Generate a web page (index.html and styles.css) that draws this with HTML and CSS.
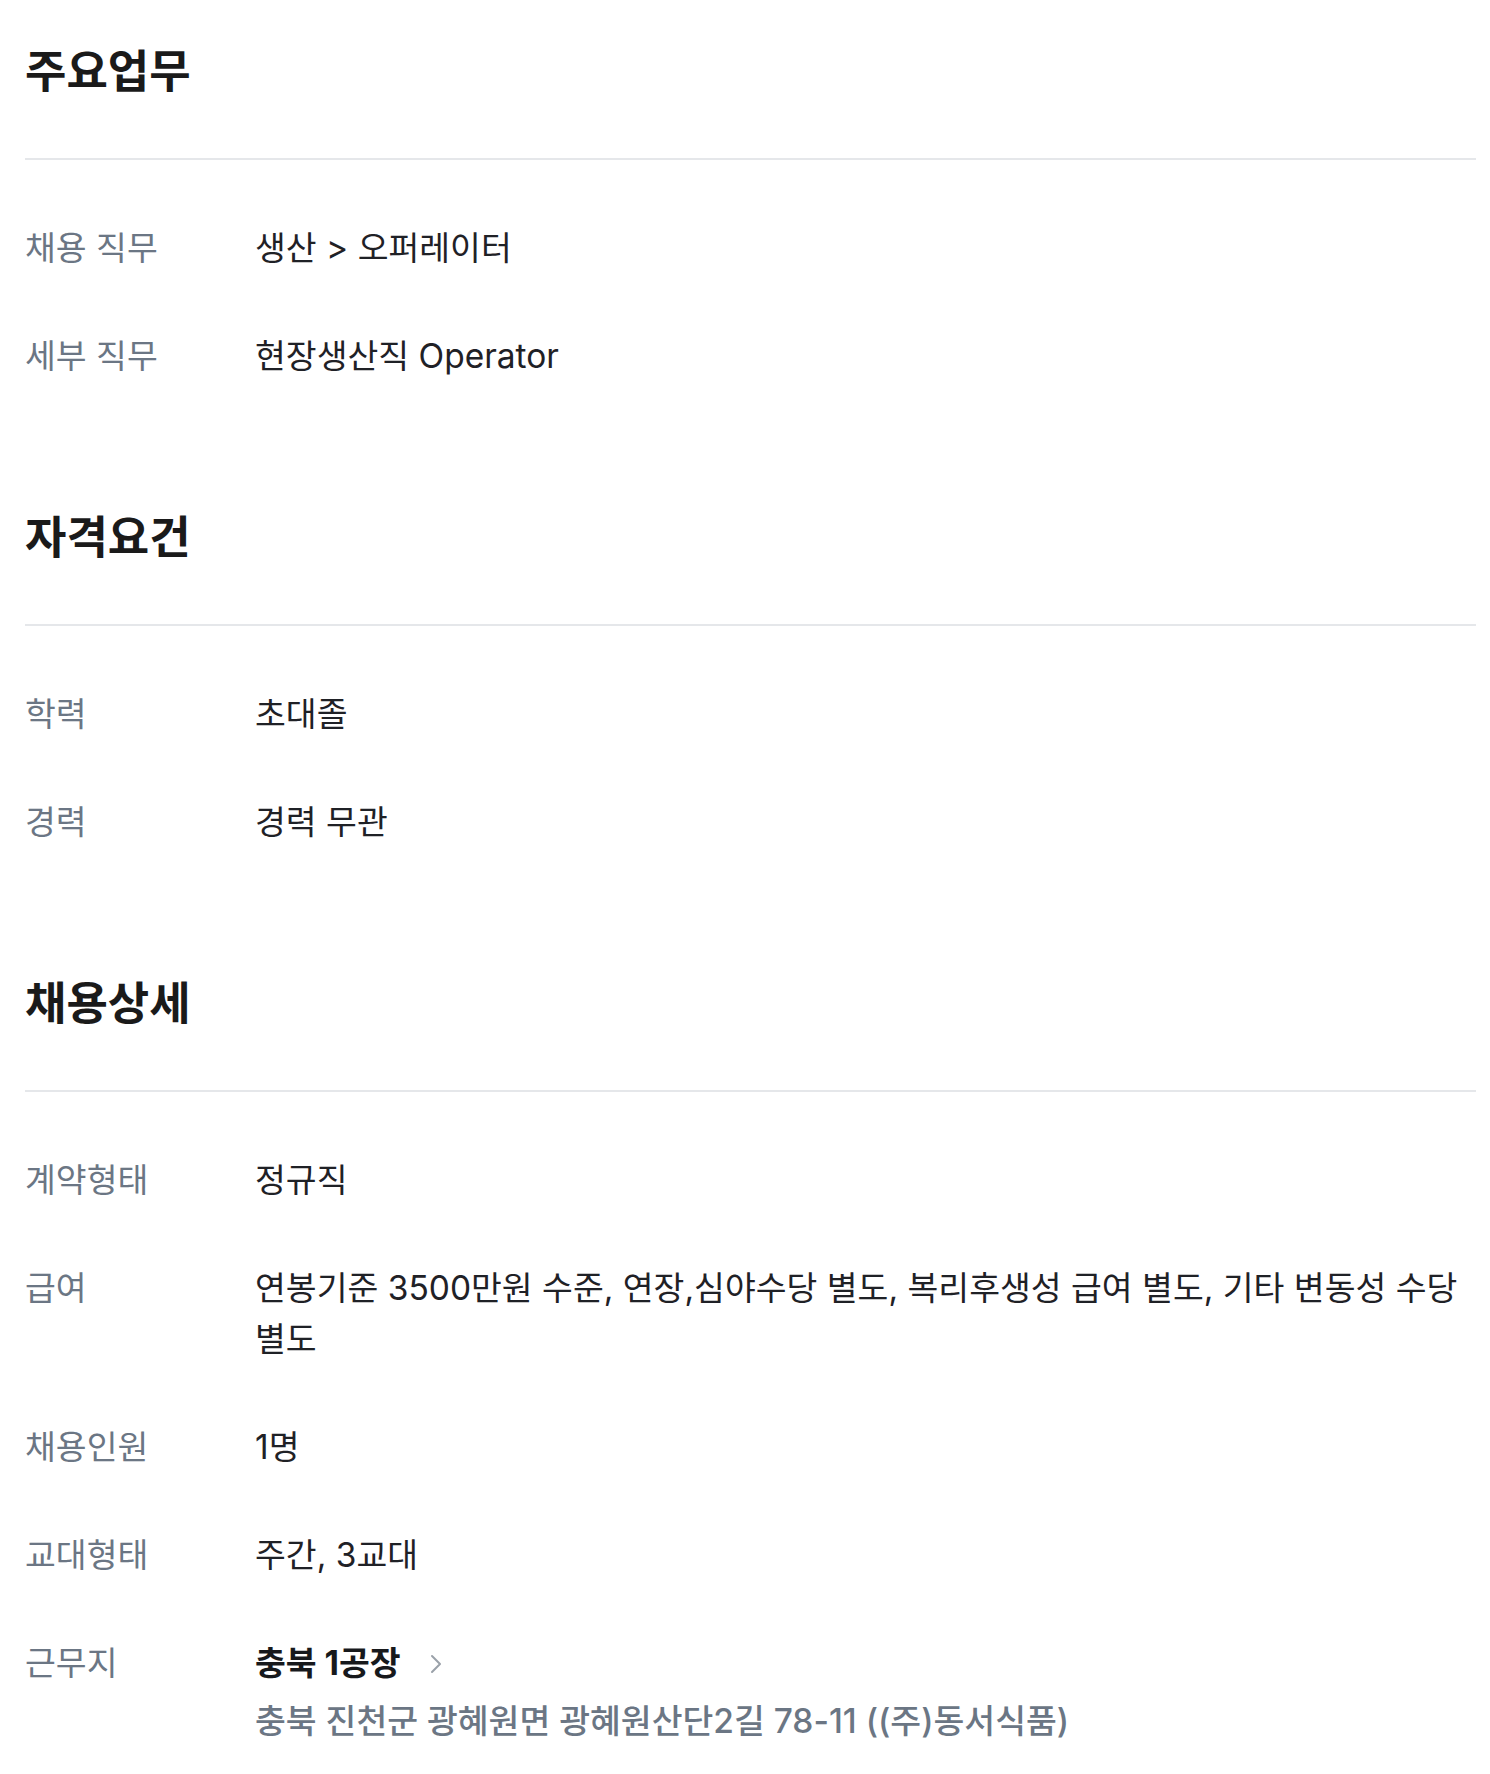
FILE: index.html
```html
<!DOCTYPE html>
<html lang="ko">
<head>
<meta charset="utf-8">
<link rel="stylesheet" href="styles.css">
</head>
<body>
<div class="page">
  <section class="section">
    <h2 class="section-title">주요업무</h2>
    <dl class="info-list">
      <div class="info-row"><dt>채용 직무</dt><dd>생산 &gt; 오퍼레이터</dd></div>
      <div class="info-row"><dt>세부 직무</dt><dd>현장생산직 Operator</dd></div>
    </dl>
  </section>
  <section class="section">
    <h2 class="section-title">자격요건</h2>
    <dl class="info-list">
      <div class="info-row"><dt>학력</dt><dd>초대졸</dd></div>
      <div class="info-row"><dt>경력</dt><dd>경력 무관</dd></div>
    </dl>
  </section>
  <section class="section">
    <h2 class="section-title">채용상세</h2>
    <dl class="info-list">
      <div class="info-row"><dt>계약형태</dt><dd>정규직</dd></div>
      <div class="info-row"><dt>급여</dt><dd>연봉기준 3500만원 수준, 연장,심야수당 별도, 복리후생성 급여 별도, 기타 변동성 수당 별도</dd></div>
      <div class="info-row"><dt>채용인원</dt><dd>1명</dd></div>
      <div class="info-row"><dt>교대형태</dt><dd>주간, 3교대</dd></div>
      <div class="info-row"><dt>근무지</dt>
        <dd>
          <div class="place-name">충북 1공장
            <svg class="chevron" viewBox="0 0 14 22" width="14" height="22"><polyline points="3,3 11,11 3,19" fill="none" stroke="#9aa1a9" stroke-width="2" stroke-linecap="round" stroke-linejoin="round"/></svg>
          </div>
          <div class="place-address">충북 진천군 광혜원면 광혜원산단2길 78-11 ((주)동서식품)</div>
        </dd>
      </div>
    </dl>
  </section>
</div>
</body>
</html>
```

FILE: styles.css
```css
html, body {
  margin: 0;
  padding: 0;
  background: #ffffff;
}
body {
  font-family: Inter, "Noto Sans CJK KR", sans-serif;
  color: #1b1d21;
}
.page {
  padding: 44px 14px 40px 25px;
}
.section + .section {
  margin-top: 128px;
}
.section-title {
  margin: 0;
  font-size: 45px;
  line-height: 56px;
  font-weight: 700;
  color: #1a1a1a;
  padding-bottom: 58px;
  border-bottom: 2px solid #e5e7ea;
}
.info-list {
  margin: 0;
  padding-top: 63px;
  display: flex;
  flex-direction: column;
  gap: 57px;
}
.info-row {
  display: grid;
  grid-template-columns: 230px 1fr;
  font-size: 33.5px;
  line-height: 51px;
}
.info-row dt {
  color: #6b7684;
  font-weight: 400;
}
.info-row dd {
  margin: 0;
  color: #1f2126;
}
.place-name {
  display: flex;
  align-items: center;
  font-weight: 700;
  color: #17191c;
}
.chevron {
  margin-left: 28px;
}
.place-address {
  margin-top: 7px;
  color: #6b7684;
  font-weight: 500;
}
```
